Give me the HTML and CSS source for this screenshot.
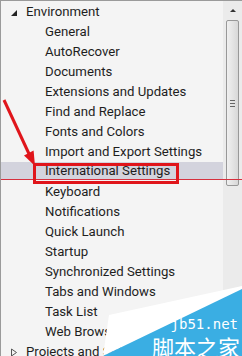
FILE: index.html
```html
<!DOCTYPE html>
<html>
<head>
<meta charset="utf-8">
<link rel="stylesheet" href="styles.css">
</head>
<body>
<div class="pane">
  <ul class="tree">
    <li class="row top"><svg class="exp" width="8" height="8" viewBox="0 0 8 8"><polygon points="7,1 7,7 1,7" fill="#222"/></svg>Environment</li>
    <li class="row child">General</li>
    <li class="row child">AutoRecover</li>
    <li class="row child">Documents</li>
    <li class="row child">Extensions and Updates</li>
    <li class="row child">Find and Replace</li>
    <li class="row child">Fonts and Colors</li>
    <li class="row child">Import and Export Settings</li>
    <li class="row child sel">International Settings</li>
    <li class="row child">Keyboard</li>
    <li class="row child">Notifications</li>
    <li class="row child">Quick Launch</li>
    <li class="row child">Startup</li>
    <li class="row child">Synchronized Settings</li>
    <li class="row child">Tabs and Windows</li>
    <li class="row child">Task List</li>
    <li class="row child">Web Browser</li>
    <li class="row top"><svg class="col" width="8" height="9" viewBox="0 0 8 9"><polygon points="1.5,1 6.5,4.5 1.5,8" fill="none" stroke="#555" stroke-width="1"/></svg>Projects and Solutions</li>
  </ul>
  <div class="scroll">
    <div class="up"></div>
    <div class="thumb"><span class="grip"></span></div>
  </div>

  <div class="redline"></div>
  <div class="redbox"></div>
  <svg class="arrow" width="60" height="180" viewBox="0 0 60 180">
    <line x1="4" y1="100" x2="30" y2="156" stroke="#e0151b" stroke-width="3"/>
    <polygon points="35,166 33.6,150.5 24,155.5" fill="#e0151b"/>
  </svg>

  <svg class="wm" width="242" height="356" viewBox="0 0 242 356">
    <polygon points="109,315 242,286 242,290 103,356" fill="#ffffff"/>
    <polygon points="103,356 242,289 242,356" fill="#3aaee3"/>
  </svg>
  <div class="wmtext">
    <span class="site">jb51.net</span>
    <span class="cn">脚本之家</span>
  </div>
</div>
</body>
</html>
```
FILE: styles.css
```css
html, body {
  margin: 0;
  padding: 0;
  background: #fff;
}
.pane {
  position: relative;
  width: 242px;
  height: 356px;
  box-sizing: border-box;
  border-top: 1px solid #9a9a9a;
  border-left: 1px solid #9a9a9a;
  background: #f4f4f4;
  display: flex;
  overflow: hidden;
  font-family: "Roboto", "Liberation Sans", sans-serif;
  font-size: 13.2px;
  color: #1e1e1e;
}
.tree {
  list-style: none;
  margin: 0;
  padding: 1px 0 0 0;
  flex: 1;
}
.row {
  height: 20px;
  line-height: 20px;
  white-space: nowrap;
}
.top {
  padding-left: 9px;
  display: flex;
  align-items: center;
}
.top svg {
  margin-right: 8px;
}
.exp {
  position: relative;
  top: 1px;
}
.child {
  padding-left: 44px;
}
.sel {
  background: #d3d3dd;
  height: 18px;
  line-height: 18px;
  margin-bottom: 2px;
}
.scroll {
  width: 19px;
  background: #ebebeb;
  display: flex;
  flex-direction: column;
  align-items: center;
}
.up {
  width: 0;
  height: 0;
  margin-top: 8px;
  border-left: 3px solid transparent;
  border-right: 3px solid transparent;
  border-bottom: 3px solid #333;
}
.thumb {
  margin-top: 8px;
  width: 13px;
  height: 166px;
  box-sizing: border-box;
  border: 1px solid #989898;
  border-radius: 2px;
  background: linear-gradient(to right, #f0f0f0, #d8d8d8);
  display: flex;
  align-items: center;
  justify-content: center;
}
.grip {
  width: 5px;
  height: 5px;
  border-top: 1px solid #666;
  border-bottom: 1px solid #666;
  position: relative;
}
.grip::after {
  content: "";
  position: absolute;
  left: 0;
  right: 0;
  top: 2px;
  border-top: 1px solid #666;
}
.redline {
  position: absolute;
  left: 0;
  top: 178px;
  width: 242px;
  height: 1px;
  background: #d6303e;
}
.redbox {
  position: absolute;
  left: 32px;
  top: 162px;
  width: 146px;
  height: 21px;
  box-sizing: border-box;
  border: 3px solid #e0151b;
}
.arrow {
  position: absolute;
  left: -1px;
  top: -1px;
}
.wm {
  position: absolute;
  left: -1px;
  top: -1px;
}
.wmtext {
  position: absolute;
  right: 2px;
  bottom: -3px;
  display: flex;
  flex-direction: column;
  align-items: flex-end;
  color: #fff;
}
.site {
  font-family: "DejaVu Sans Mono", monospace;
  font-size: 14px;
  line-height: 15px;
  margin-right: 2px;
  margin-bottom: 1px;
}
.cn {
  font-family: "Noto Sans CJK SC", sans-serif;
  font-size: 22px;
  line-height: 26px;
}
```
